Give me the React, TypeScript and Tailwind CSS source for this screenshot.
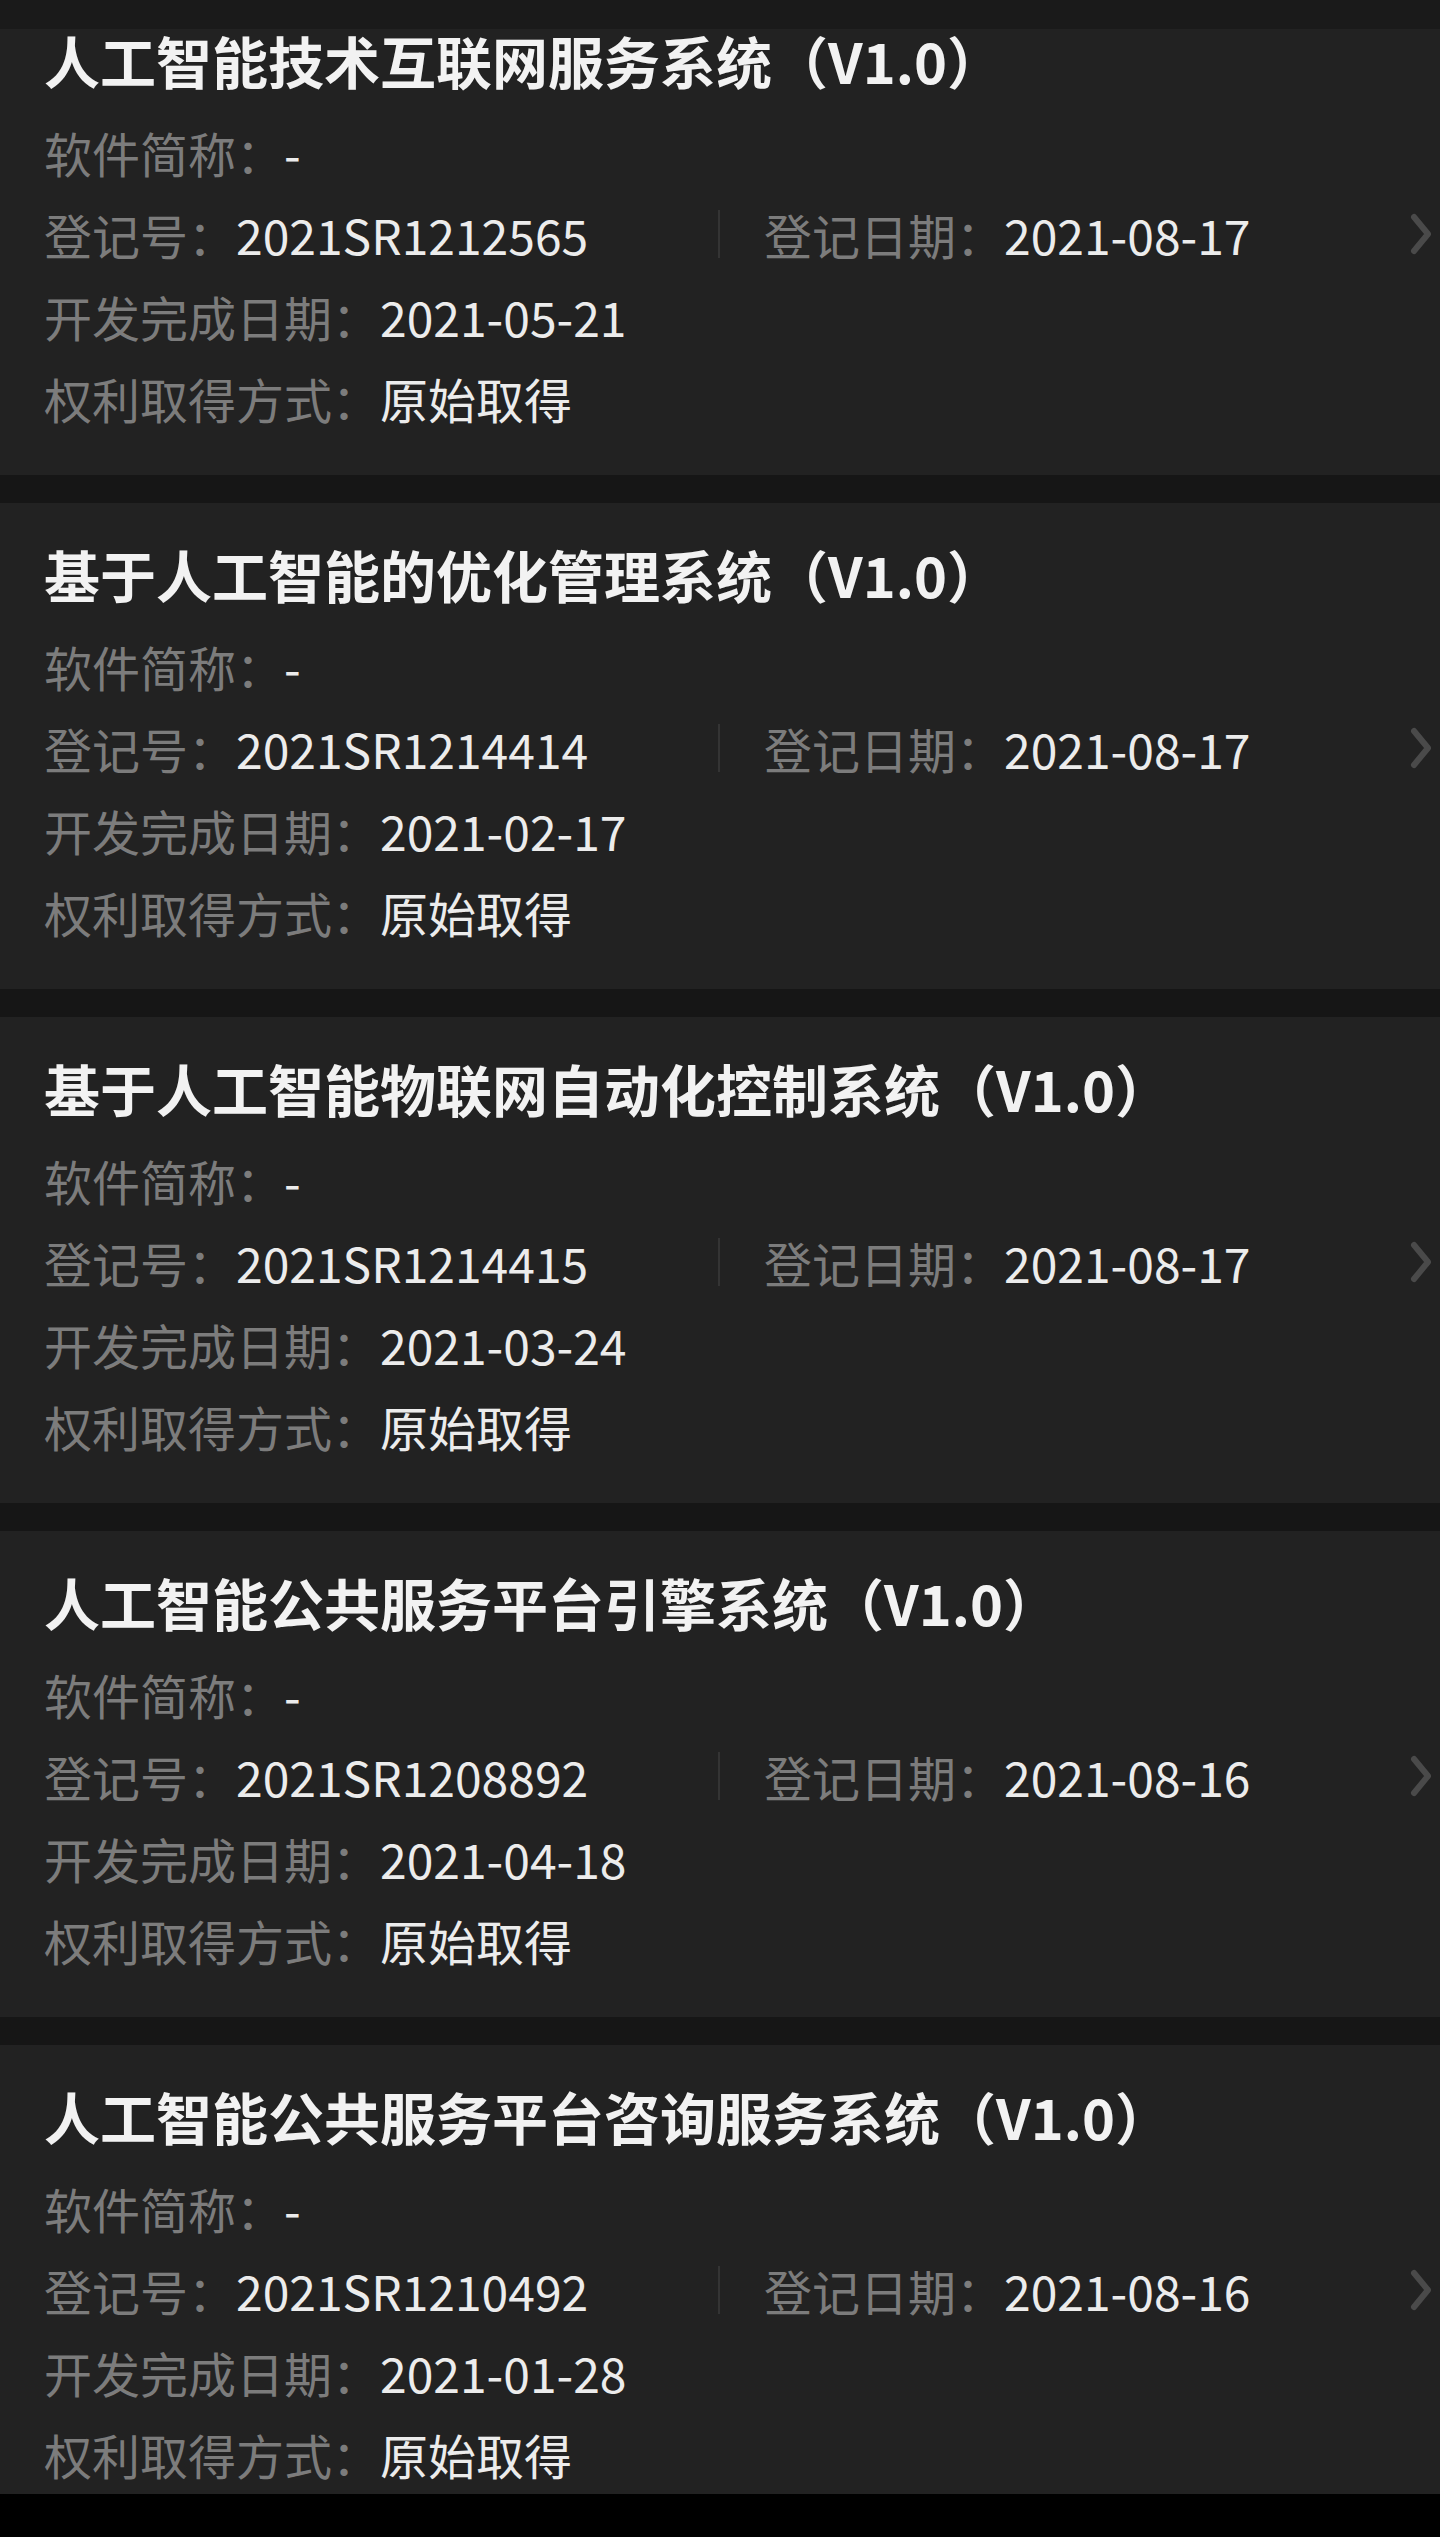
import React from 'react';

const records = [
    { name: '人工智能技术互联网服务系统（V1.0）', regNo: '2021SR1212565', regDate: '2021-08-17', devDate: '2021-05-21' },
    { name: '基于人工智能的优化管理系统（V1.0）', regNo: '2021SR1214414', regDate: '2021-08-17', devDate: '2021-02-17' },
    { name: '基于人工智能物联网自动化控制系统（V1.0）', regNo: '2021SR1214415', regDate: '2021-08-17', devDate: '2021-03-24' },
    { name: '人工智能公共服务平台引擎系统（V1.0）', regNo: '2021SR1208892', regDate: '2021-08-16', devDate: '2021-04-18' },
    { name: '人工智能公共服务平台咨询服务系统（V1.0）', regNo: '2021SR1210492', regDate: '2021-08-16', devDate: '2021-01-28' },
];

const font = "font-['Noto_Sans_CJK_SC','Noto_Sans',sans-serif]";

function Chevron() {
    return (
        <svg width="22" height="42" viewBox="0 0 22 42" fill="none" className="shrink-0">
            <path d="M4 4 L18 21 L4 38" stroke="#4a4a4a" strokeWidth="6" strokeLinecap="round" strokeLinejoin="round" />
        </svg>
    );
}

function Field({ label, value }: { label: string; value: string }) {
    return (
        <div className="flex items-center h-[82px] text-[48px] leading-none whitespace-nowrap">
            <span className="text-[#7c7c7c]">{label}：</span>
            <span className="text-[#ececec]">{value}</span>
        </div>
    );
}

function RecordCard({ item, first }: { item: typeof records[number]; first?: boolean }) {
    return (
        <div className={`bg-[#222222] pl-[44px] pr-[8px] pb-[36px] ${first ? 'pt-0' : 'pt-[40px]'}`}>
            <h2 className="h-[62px] flex items-center text-[56px] font-bold text-[#f2f2f2] leading-none whitespace-nowrap">
                {item.name}
            </h2>
            <div className="mt-[20px]">
                <Field label="软件简称" value="-" />
                <div className="flex items-center">
                    <div className="w-[674px]">
                        <Field label="登记号" value={item.regNo} />
                    </div>
                    <div className="w-[2px] h-[48px] bg-[#343434]" />
                    <div className="flex-1 pl-[44px]">
                        <Field label="登记日期" value={item.regDate} />
                    </div>
                    <Chevron />
                </div>
                <Field label="开发完成日期" value={item.devDate} />
                <Field label="权利取得方式" value="原始取得" />
            </div>
        </div>
    );
}

export default function App() {
    return (
        <div className={`relative w-[1440px] h-[2537px] overflow-hidden bg-[#161616] ${font}`}>
            <div className="h-[29px] bg-[#1a1a1a]" />
            <div className="flex flex-col gap-[28px]">
                {records.map((r, i) => (
                    <RecordCard key={i} item={r} first={i === 0} />
                ))}
            </div>
            <div className="absolute left-0 right-0 bottom-0 h-[43px] bg-black" />
        </div>
    );
}
